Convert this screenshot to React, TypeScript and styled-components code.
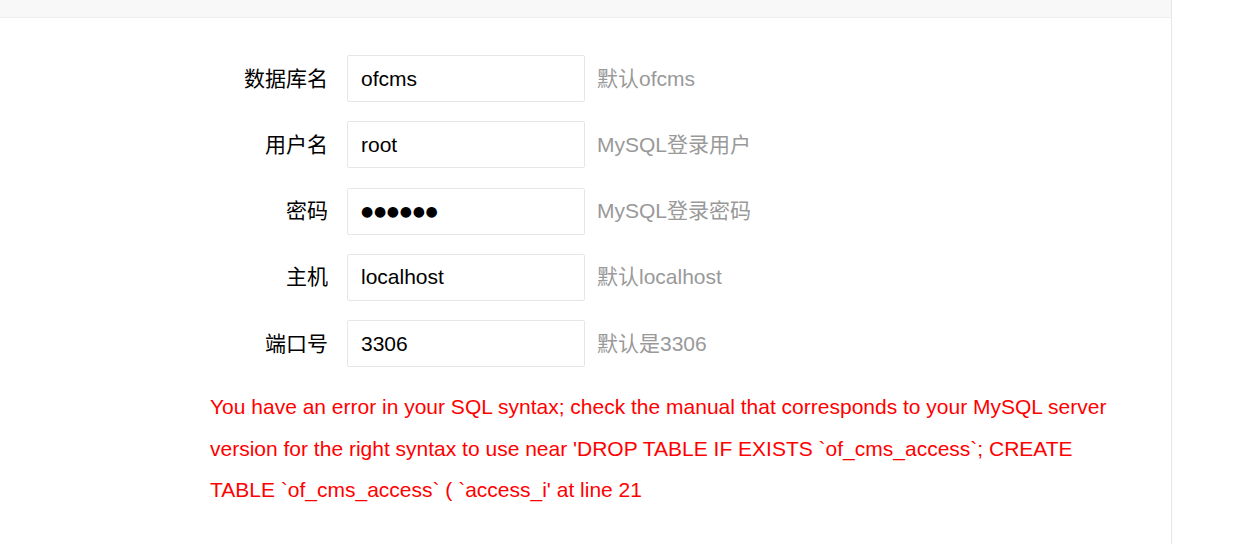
import styled, { createGlobalStyle } from "styled-components";

const GlobalStyle = createGlobalStyle`
  html, body {
    margin: 0;
    padding: 0;
    background: #fff;
    font-family: "Liberation Sans", Arial, "Noto Sans CJK SC", sans-serif;
    overflow: hidden;
  }
`;

const Panel = styled.div`
  width: 1172px;
  min-height: 544px;
  border-right: 1px solid #e6e6e6;
  box-sizing: border-box;
`;

const Header = styled.div`
  height: 17px;
  background: #f8f8f8;
  border-bottom: 1px solid #eee;
  overflow: hidden;
`;

const HeaderTitle = styled.div`
  margin-top: -22px;
  padding-left: 412px;
  font-size: 21px;
  line-height: 24px;
  color: #333;
`;

const Form = styled.div`
  padding: 37px 0 0 210px;
  display: flex;
  flex-direction: column;
  gap: 19.3px;
`;

const Row = styled.div`
  display: flex;
  align-items: center;
  height: 47px;
`;

const Label = styled.label`
  width: 118px;
  text-align: right;
  font-size: 21px;
  line-height: 24px;
  color: #000;
`;

const Input = styled.input<{ $dots?: boolean }>`
  box-sizing: border-box;
  width: 238px;
  height: 47px;
  margin-left: 19px;
  padding: 0 13px;
  border: 1px solid #e6e6e6;
  border-radius: 2px;
  background: #fff;
  font-family: ${(p) =>
    p.$dots ? '"DejaVu Sans", sans-serif' : '"Liberation Sans", Arial, sans-serif'};
  font-size: ${(p) => (p.$dots ? "14px" : "21px")};
  letter-spacing: ${(p) => (p.$dots ? "0.7px" : "0")};
  color: #000;
  outline: none;
`;

const Hint = styled.span`
  margin-left: 12px;
  font-size: 21px;
  line-height: 24px;
  color: #999;
`;

const ErrorText = styled.div`
  width: 925px;
  margin: 19px 0 0 210px;
  font-size: 21px;
  line-height: 41.5px;
  color: #f00;
`;

const fields = [
  { label: "数据库名", value: "ofcms", hint: "默认ofcms" },
  { label: "用户名", value: "root", hint: "MySQL登录用户" },
  { label: "密码", value: "●●●●●●", hint: "MySQL登录密码", dots: true },
  { label: "主机", value: "localhost", hint: "默认localhost" },
  { label: "端口号", value: "3306", hint: "默认是3306" },
];

export default function App() {
  return (
    <>
      <GlobalStyle />
      <Panel>
        <Header>
          <HeaderTitle>第二步：数据库配置</HeaderTitle>
        </Header>
        <Form>
          {fields.map((f) => (
            <Row key={f.label}>
              <Label>{f.label}</Label>
              <Input readOnly value={f.value} $dots={f.dots} />
              <Hint>{f.hint}</Hint>
            </Row>
          ))}
        </Form>
        <ErrorText>
          You have an error in your SQL syntax; check the manual that corresponds to your MySQL
          server version for the right syntax to use near 'DROP TABLE IF EXISTS `of_cms_access`;
          CREATE TABLE `of_cms_access` ( `access_i' at line 21
        </ErrorText>
      </Panel>
    </>
  );
}
